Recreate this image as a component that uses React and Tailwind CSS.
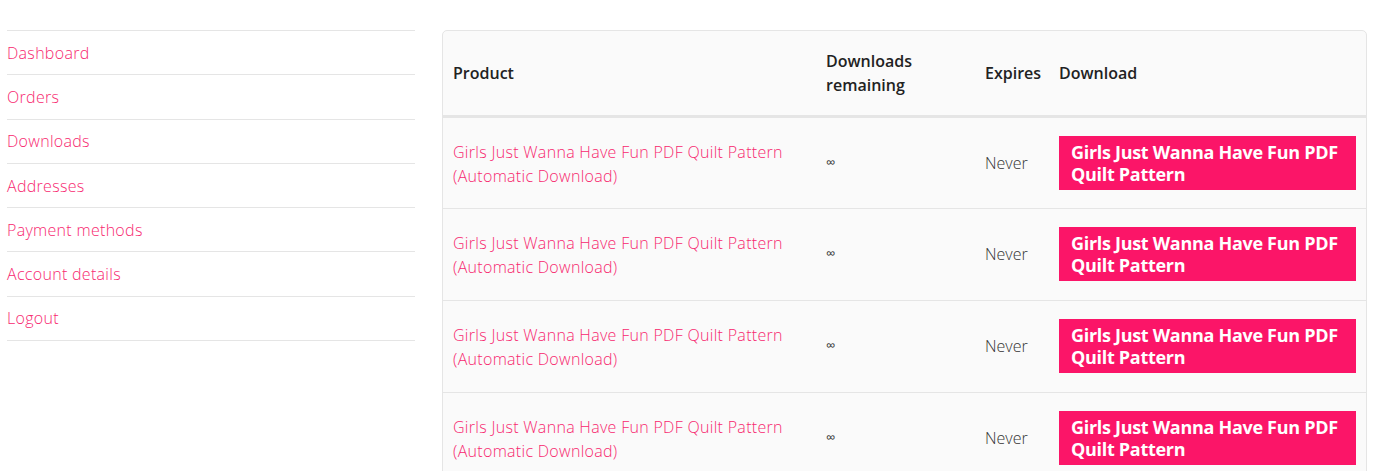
const NAV = ["Dashboard", "Orders", "Downloads", "Addresses", "Payment methods", "Account details", "Logout"];

const ROWS = [1, 2, 3, 4];

export default function App() {
  return (
    <div className="flex bg-white pt-[30px] font-['Open_Sans',sans-serif] min-h-[471px]">
      <nav className="ml-[7px] w-[408px] shrink-0">
        <ul className="border-t border-[#e5e5e5]">
          {NAV.map((n) => (
            <li key={n} className="flex h-[44.3px] items-center border-b border-[#e5e5e5]">
              <a className="text-[16px] font-light tracking-[0.3px] text-[#f7286f]">{n}</a>
            </li>
          ))}
        </ul>
      </nav>
      <div className="ml-[27px] w-[925px] overflow-hidden rounded-t-[5px] border border-[#e5e5e5] bg-[#fafafa]">
        <table className="w-full table-fixed border-collapse text-left">
          <colgroup>
            <col className="w-[373px]" />
            <col className="w-[159px]" />
            <col className="w-[74px]" />
            <col />
          </colgroup>
          <thead>
            <tr className="h-[85px] border-b-[3px] border-[#e5e5e5] text-[16px] leading-[24px] text-[#222]">
              <th className="px-[10px] font-semibold">Product</th>
              <th className="px-[10px] font-semibold">Downloads remaining</th>
              <th className="px-[10px] font-semibold">Expires</th>
              <th className="px-[10px] font-semibold">Download</th>
            </tr>
          </thead>
          <tbody>
            {ROWS.map((r) => (
              <tr key={r} className="h-[92px] border-b border-[#e5e5e5]">
                <td className="px-[10px] pt-[2px] text-[16px] font-light leading-[24px] tracking-[0.3px] text-[#f7286f]">
                  <a>Girls Just Wanna Have Fun PDF Quilt Pattern (Automatic Download)</a>
                </td>
                <td className="px-[10px] text-[13px] text-[#333]">∞</td>
                <td className="px-[10px] text-[16px] font-light text-[#333]">Never</td>
                <td className="py-[18px] pl-[10px] pr-[10px]">
                  <a className="block bg-[#fb1568] px-[12px] py-[5px] text-[18px] font-bold leading-[22px] tracking-[-0.3px] text-white">
                    Girls Just Wanna Have Fun PDF Quilt Pattern
                  </a>
                </td>
              </tr>
            ))}
          </tbody>
        </table>
      </div>
    </div>
  );
}
